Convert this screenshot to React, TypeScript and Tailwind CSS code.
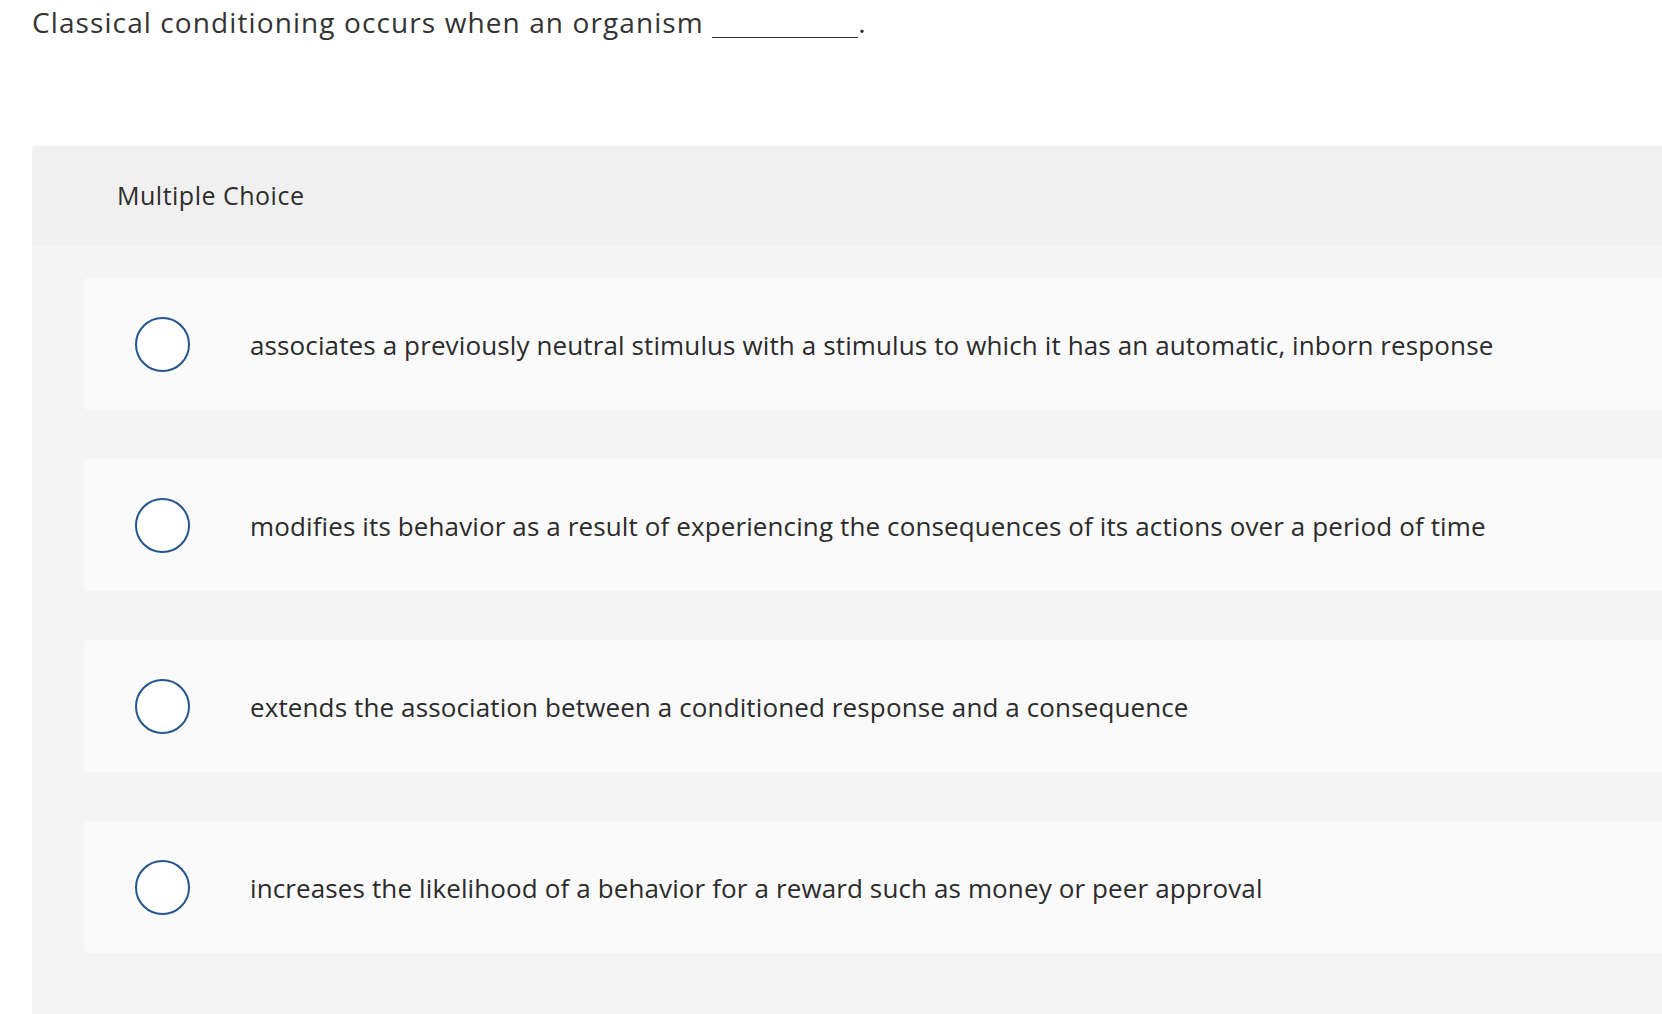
import React from 'react'

const options = [
  'associates a previously neutral stimulus with a stimulus to which it has an automatic, inborn response',
  'modifies its behavior as a result of experiencing the consequences of its actions over a period of time',
  'extends the association between a conditioned response and a consequence',
  'increases the likelihood of a behavior for a reward such as money or peer approval',
]

function Radio() {
  return (
    <span className="block w-[55px] h-[55px] shrink-0 rounded-full border-2 border-[#23568e] bg-white" />
  )
}

export default function App() {
  return (
    <div
      className="h-[1014px] overflow-hidden bg-white text-[#2b2b2b]"
      style={{ fontFamily: '"Open Sans", "Liberation Sans", sans-serif' }}
    >
      {/* Question prompt */}
      <div className="pl-8 pt-[3px] h-[146px] text-[28px] leading-[38px] tracking-[1.1px] text-[#333]">
        Classical conditioning occurs when an organism{' '}
        <span className="inline-block w-[146px] h-[28px] border-b-[1.5px] border-[#333] align-[-5px]" />
        .
      </div>

      {/* Answer panel */}
      <div className="ml-8 rounded-tl-[4px] bg-[#f5f5f5] min-h-[868px]">
        <div className="h-[100px] flex items-center pl-[85px] bg-[#f0f0f0] rounded-tl-[4px] text-[25px] tracking-[0.5px] text-[#2d2d2d]">
          Multiple Choice
        </div>

        <div className="pl-[52px] pt-[32px] flex flex-col gap-[49px]">
          {options.map((text) => (
            <label
              key={text}
              className="h-[132px] flex items-center pl-[51px] rounded-l-[4px] bg-[#fafafa] cursor-pointer"
            >
              <Radio />
              <span className="ml-[60px] pt-[3px] text-[26px] tracking-[0.12px] text-[#2b2b2b]">{text}</span>
            </label>
          ))}
        </div>
      </div>
    </div>
  )
}
